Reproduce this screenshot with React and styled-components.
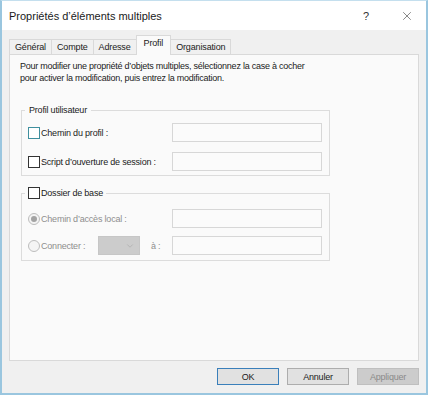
import React from 'react';
import styled, { createGlobalStyle } from 'styled-components';
import { X, ChevronDown } from 'lucide-react';

const GlobalStyle = createGlobalStyle`
  html, body { margin:0; padding:0; background:#fff; }
  body { font-family:"Liberation Sans", Arial, sans-serif; color:#1a1a1a; }
`;

const Window = styled.div`
  width:428px;
  height:395px;
  box-sizing:border-box;
  border:2px solid #9ac6df;
  border-top:1px solid #c4dfee;
  background:#f0f0f0;
  display:flex;
  flex-direction:column;
`;

const TitleBar = styled.div`
  height:29px;
  flex-shrink:0;
  background:#fff;
  display:flex;
  align-items:center;
  padding:0 9px 0 7px;
`;

const Title = styled.div`
  flex:1;
  font-size:11px;
  color:#1a1a1a;
`;

const TitleButton = styled.div`
  width:20px;
  height:20px;
  display:flex;
  align-items:center;
  justify-content:center;
  font-size:11px;
  color:#333;
  margin-left:${({ $gap }) => $gap || 0}px;
`;

const Body = styled.div`
  flex:1;
  display:flex;
  flex-direction:column;
  padding:5px 7px 0 7px;
`;

const TabStrip = styled.div`
  display:flex;
  align-items:flex-end;
  height:19px;
`;

const Tab = styled.div`
  box-sizing:border-box;
  height:${({ $active }) => ($active ? 20 : 15)}px;
  margin-bottom:${({ $active }) => ($active ? -1 : 0)}px;
  margin-right:-1px;
  padding:${({ $active }) => ($active ? '2px 7px 0' : '0 5px')};
  border:1px solid #d9d9d9;
  border-bottom:none;
  background:${({ $active }) => ($active ? '#fafafa' : '#f0f0f0')};
  font-size:9px;
  letter-spacing:-0.15px;
  display:flex;
  align-items:${({ $active }) => ($active ? 'flex-start' : 'center')};
  position:relative;
  z-index:${({ $active }) => ($active ? 2 : 1)};
`;

const Panel = styled.div`
  height:307px;
  box-sizing:border-box;
  border:1px solid #d9d9d9;
  background:#fafafa;
  padding:5px 10px;
  position:relative;
  z-index:1;
`;

const Intro = styled.div`
  font-size:9px;
  line-height:12px;
  letter-spacing:-0.25px;
`;

const Group = styled.fieldset`
  width:309px;
  box-sizing:border-box;
  margin:${({ $top }) => $top}px 0 0 1px;
  padding:${({ $padTop }) => $padTop}px 6px ${({ $padBottom }) => $padBottom}px 6px;
  border:1px solid #dcdcdc;
  min-width:0;
`;

const Legend = styled.legend`
  margin-left:-3px;
  padding:0 ${({ $pad }) => $pad}px;
  font-size:9px;
  line-height:12px;
  letter-spacing:-0.2px;
  display:flex;
  align-items:center;
`;

const Rows = styled.div`
  display:grid;
  grid-template-columns:144px 150px;
  grid-auto-rows:19px;
  row-gap:${({ $gap }) => $gap}px;
  align-items:center;
`;

const LabelCell = styled.div`
  display:flex;
  align-items:center;
  font-size:9px;
  letter-spacing:-0.2px;
  color:${({ $disabled }) => ($disabled ? '#8e8e8e' : '#1a1a1a')};
`;

const Check = styled.span`
  width:12px;
  height:12px;
  box-sizing:border-box;
  border:1px solid ${({ $focus }) => ($focus ? '#3f8f9e' : '#333')};
  background:#fff;
  margin-right:1px;
  flex-shrink:0;
`;

const Radio = styled.span`
  width:12px;
  height:12px;
  box-sizing:border-box;
  border-radius:50%;
  border:1px solid #bdbdbd;
  background:#f4f4f4;
  margin-right:1px;
  flex-shrink:0;
  display:flex;
  align-items:center;
  justify-content:center;
  &::after {
    content:"";
    width:6px;
    height:6px;
    border-radius:50%;
    background:${({ $checked }) => ($checked ? '#a3a3a3' : 'transparent')};
  }
`;

const RadioLabel = styled.span`
  width:57px;
`;

const TextBox = styled.div`
  width:150px;
  height:19px;
  box-sizing:border-box;
  border:1px solid #d7d7d7;
  background:#fbfbfb;
`;

const Combo = styled.div`
  width:42px;
  height:19px;
  box-sizing:border-box;
  border:1px solid #c6c6c6;
  background:#cccccc;
  display:flex;
  align-items:center;
  justify-content:flex-end;
  padding-right:4px;
  color:#a6a6a6;
`;

const Suffix = styled.span`
  margin-left:11px;
`;

const Footer = styled.div`
  display:flex;
  justify-content:flex-end;
  gap:8px;
  padding:7px 0 0 0;
`;

const Button = styled.div`
  width:62px;
  height:17px;
  box-sizing:border-box;
  display:flex;
  align-items:center;
  justify-content:center;
  font-size:9px;
  letter-spacing:-0.2px;
  background:${({ $disabled }) => ($disabled ? '#cccccc' : '#e1e1e1')};
  color:${({ $disabled }) => ($disabled ? '#8a8a8a' : '#1a1a1a')};
  border:1px solid ${({ $primary, $disabled }) =>
    $primary ? '#3a7fba' : $disabled ? '#bfbfbf' : '#adadad'};
`;

const tabs = ['Général', 'Compte', 'Adresse', 'Profil', 'Organisation'];

export default function App() {
  return (
    <>
      <GlobalStyle />
      <Window>
        <TitleBar>
          <Title>Propriétés d’éléments multiples</Title>
          <TitleButton>?</TitleButton>
          <TitleButton $gap={21}>
            <X size={14} strokeWidth={1} />
          </TitleButton>
        </TitleBar>
        <Body>
          <TabStrip>
            {tabs.map((t) => (
              <Tab key={t} $active={t === 'Profil'}>{t}</Tab>
            ))}
          </TabStrip>
          <Panel>
            <Intro>
              Pour modifier une propriété d’objets multiples, sélectionnez la case à cocher
              <br />
              pour activer la modification, puis entrez la modification.
            </Intro>

            <Group $top={20} $padTop={7} $padBottom={4}>
              <Legend $pad={4}>Profil utilisateur</Legend>
              <Rows $gap={10}>
                <LabelCell>
                  <Check $focus />
                  Chemin du profil :
                </LabelCell>
                <TextBox />
                <LabelCell>
                  <Check />
                  Script d’ouverture de session :
                </LabelCell>
                <TextBox />
              </Rows>
            </Group>

            <Group $top={11} $padTop={10} $padBottom={5}>
              <Legend $pad={3}>
                <Check />
                Dossier de base
              </Legend>
              <Rows $gap={8}>
                <LabelCell $disabled>
                  <Radio $checked />
                  Chemin d’accès local :
                </LabelCell>
                <TextBox />
                <LabelCell $disabled>
                  <Radio />
                  <RadioLabel>Connecter :</RadioLabel>
                  <Combo>
                    <ChevronDown size={10} strokeWidth={1.5} />
                  </Combo>
                  <Suffix>à :</Suffix>
                </LabelCell>
                <TextBox />
              </Rows>
            </Group>
          </Panel>
          <Footer>
            <Button $primary>OK</Button>
            <Button>Annuler</Button>
            <Button $disabled>Appliquer</Button>
          </Footer>
        </Body>
      </Window>
    </>
  );
}
